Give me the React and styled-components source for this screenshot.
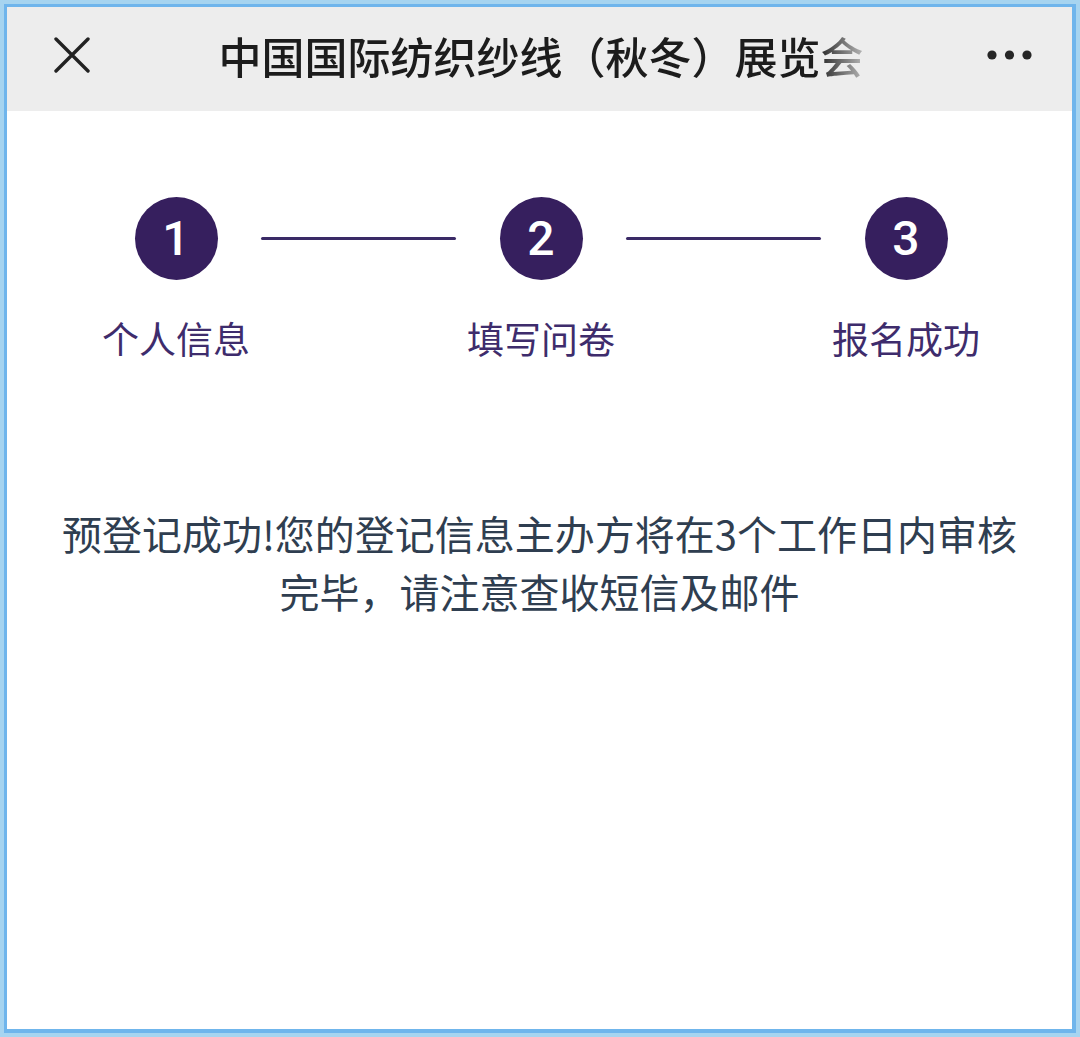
import React from "react";
import styled, { createGlobalStyle } from "styled-components";

const Global = createGlobalStyle`
  html, body { margin: 0; padding: 0; background: #a6d4f0; }
  body { font-family: "Noto Sans CJK SC", "Noto Sans", sans-serif; }
  * { box-sizing: border-box; }
`;

const Frame = styled.div`
  width: 1080px;
  height: 1037px;
  padding: 4px;
  background: #a6d4f0;
`;

const Inner = styled.div`
  width: 100%;
  height: 100%;
  border: 3px solid #6fb5ec;
  border-bottom-width: 4px;
  border-right-width: 4px;
  background: #ffffff;
  display: flex;
  flex-direction: column;
`;

const TopBar = styled.header`
  height: 104px;
  flex: none;
  background: #ededed;
  display: flex;
  align-items: center;
  padding: 0 37px 8px 40px;
`;

const IconButton = styled.div`
  width: 50px;
  height: 50px;
  display: flex;
  align-items: center;
  justify-content: center;
  flex: none;
  color: #222;
`;

const Title = styled.h1`
  flex: 1;
  margin: 0;
  text-align: center;
  font-size: 43px;
  font-weight: 500;
  color: #1c1c1c;
  letter-spacing: 0;
  white-space: nowrap;
  line-height: 60px;
  padding-right: 0;
`;

const TitleText = styled.span`
  display: inline-block;
  -webkit-mask-image: linear-gradient(to right, #000 calc(100% - 48px), rgba(0,0,0,0.25) 100%);
  mask-image: linear-gradient(to right, #000 calc(100% - 48px), rgba(0,0,0,0.25) 100%);
`;

const Body = styled.main`
  flex: 1;
  display: flex;
  flex-direction: column;
  align-items: center;
  padding-top: 86px;
`;

const Steps = styled.div`
  display: flex;
  align-items: flex-start;
  justify-content: center;
  margin-left: 3px;
`;

const Step = styled.div`
  width: 170px;
  display: flex;
  flex-direction: column;
  align-items: center;
`;

const Circle = styled.div`
  width: 83px;
  height: 83px;
  border-radius: 50%;
  background: #361f5e;
  color: #fff;
  display: flex;
  align-items: center;
  justify-content: center;
  font-family: Roboto, "Liberation Sans", sans-serif;
  font-size: 48px;
  font-weight: 500;
  line-height: 1;
`;

const Label = styled.div`
  margin-top: 34px;
  font-size: 37px;
  line-height: 48px;
  color: #3e2c6c;
  white-space: nowrap;
`;

const Connector = styled.div`
  width: 195px;
  height: 3px;
  margin-top: 40px;
  background: #3a2a66;
  border-radius: 2px;
  flex: none;
`;

const Message = styled.p`
  margin: 142px 0 0;
  width: 990px;
  text-align: center;
  font-size: 40px;
  line-height: 58px;
  color: #2f3e50;
`;

const CloseIcon = () => (
  <svg width="36" height="36" viewBox="0 0 36 36" fill="none">
    <path d="M2 2 L34 34 M34 2 L2 34" stroke="#222" strokeWidth="3.4" strokeLinecap="round" />
  </svg>
);

const MoreIcon = () => (
  <svg width="50" height="12" viewBox="0 0 50 12">
    <circle cx="7" cy="6" r="4.6" fill="#262626" />
    <circle cx="24.5" cy="6" r="4.6" fill="#262626" />
    <circle cx="42" cy="6" r="4.6" fill="#262626" />
  </svg>
);

const steps = [
  { n: "1", label: "个人信息" },
  { n: "2", label: "填写问卷" },
  { n: "3", label: "报名成功" },
];

export default function App() {
  return (
    <>
      <Global />
      <Frame>
        <Inner>
          <TopBar>
            <IconButton>
              <CloseIcon />
            </IconButton>
            <Title>
              <TitleText>中国国际纺织纱线（秋冬）展览会</TitleText>
            </Title>
            <IconButton>
              <MoreIcon />
            </IconButton>
          </TopBar>
          <Body>
            <Steps>
              {steps.map((s, i) => (
                <React.Fragment key={s.n}>
                  {i > 0 && <Connector />}
                  <Step>
                    <Circle>{s.n}</Circle>
                    <Label>{s.label}</Label>
                  </Step>
                </React.Fragment>
              ))}
            </Steps>
            <Message>
              预登记成功!您的登记信息主办方将在3个工作日内审核完毕，请注意查收短信及邮件
            </Message>
          </Body>
        </Inner>
      </Frame>
    </>
  );
}
